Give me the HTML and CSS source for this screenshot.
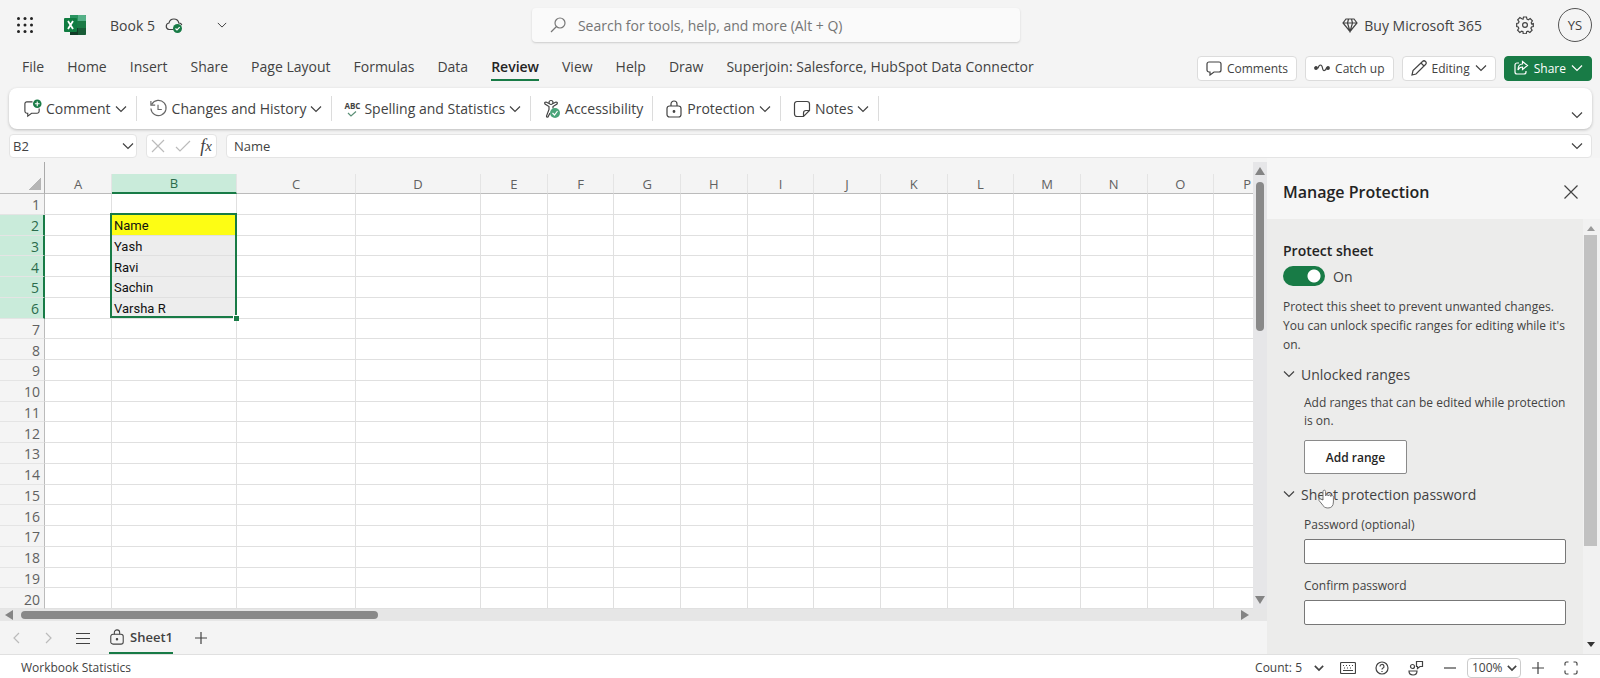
FILE: index.html
```html
<!doctype html>
<html lang="en">

  <head>

    <title>Book 5 - Excel</title>

    <meta charset="utf-8">
    <meta name="viewport" content="width=device-width, initial-scale=1" />

    <link rel="stylesheet" href="styles.css">

  </head>

  <body>

    <svg class="sprite" aria-hidden="true">
      <symbol id="chevron" viewBox="0 0 12 12"><path d="M1 3.5l5 5 5-5" /></symbol>
      <symbol id="lock" viewBox="0 0 18 18">
        <rect x="2" y="6" width="14" height="11" rx="2.5" />
        <path d="M6 6V4a3 3 0 0 1 6 0v2" />
        <circle cx="9" cy="11.5" r=".8" fill="currentColor" />
      </symbol>
      <symbol id="plus" viewBox="0 0 14 14"><path d="M7 1v12M1 7h12" /></symbol>
    </svg>

    <div class="app">

      <header class="titlebar">
        <button class="plain waffle" aria-label="App launcher">
          <svg class="icon" width="18" height="18" viewBox="0 0 18 18">
            <g fill="#222" stroke="none">
              <circle cx="2.5" cy="2.5" r="1.5" /><circle cx="9" cy="2.5" r="1.5" /><circle cx="15.5" cy="2.5" r="1.5" />
              <circle cx="2.5" cy="9" r="1.5" /><circle cx="9" cy="9" r="1.5" /><circle cx="15.5" cy="9" r="1.5" />
              <circle cx="2.5" cy="15.5" r="1.5" /><circle cx="9" cy="15.5" r="1.5" /><circle cx="15.5" cy="15.5" r="1.5" />
            </g>
          </svg>
        </button>
        <svg class="logo" width="22" height="20" viewBox="0 0 22 20">
          <rect x="6" y="0" width="16" height="20" rx="1" fill="#1b7a45" />
          <path d="M6 0h8v6H6z" fill="#2a9360" />
          <path d="M14 0h7l1 1v5h-8z" fill="#54b087" />
          <path d="M6 13h8v7H6z" fill="#123d28" />
          <path d="M14 13h8v6l-1 1h-7z" fill="#185c37" />
          <rect x="0" y="3" width="13" height="14" rx="1" fill="#107c41" />
          <path d="M4 6l5 8M9 6l-5 8" fill="none" stroke="#fff" stroke-width="1.8" />
        </svg>
        <span class="doc-name">Book 5</span>
        <svg class="icon cloud" width="18" height="18" viewBox="0 0 18 18">
          <path d="M8.5 13.5H4a3.3 3.3 0 0 1 0-6.5 5 5 0 0 1 9.8 0 3 3 0 0 1 3 2" />
          <circle cx="12.5" cy="12.5" r="4.5" fill="#187b46" stroke="none" />
          <path d="M10.500 12.500l1.500 1.500 2.700-2.800" stroke="#fff" />
        </svg>
        <button class="plain doc-menu" aria-label="Document menu"><svg class="icon" width="10" height="10"><use href="#chevron" /></svg></button>

        <label class="search">
          <svg class="icon" width="16" height="16" viewBox="0 0 16 16"><circle cx="10" cy="6" r="5" /><path d="M6.5 9.5L1 15" /></svg>
          <input type="search" placeholder="Search for tools, help, and more (Alt + Q)" aria-label="Search">
        </label>

        <a class="buy" href="#">
          <svg class="icon" width="16" height="16" viewBox="0 0 16 16"><path d="M4 2h8l3 4-7 8.5L1 6zM1 6h14M5.5 6L8 14.5 10.5 6l-1-4h-3z" /></svg>
          Buy Microsoft 365
        </a>
        <button class="plain settings" aria-label="Settings">
          <svg class="icon" width="18" height="18" viewBox="0 0 18 18">
            <circle cx="9" cy="9" r="2.4" />
            <path d="M7.500 1h3l.5 2.200 1.300.6 1.900-1.200 2.200 2.200-1.200 1.900.5 1.300L17.300 7.500v3l-1.800.5-.6 1.300 1.200 1.900-2.200 2.200-1.900-1.200-1.300.5-.5 2.100h-3L7 15.700l-1.300-.5-1.900 1.200-2.200-2.200 1.200-1.900L2.200 11 .7 10.500v-3L2.500 7l.5-1.300-1.300-1.900 2.200-2.200 1.900 1.200L7 3.200z" />
          </svg>
        </button>
        <button class="avatar" aria-label="Account">YS</button>
      </header>

      <nav class="tabs">
        <a class="tab" href="#">File</a>
        <a class="tab" href="#">Home</a>
        <a class="tab" href="#">Insert</a>
        <a class="tab" href="#">Share</a>
        <a class="tab" href="#">Page Layout</a>
        <a class="tab" href="#">Formulas</a>
        <a class="tab" href="#">Data</a>
        <a class="tab tab-active" href="#">Review</a>
        <a class="tab" href="#">View</a>
        <a class="tab" href="#">Help</a>
        <a class="tab" href="#">Draw</a>
        <a class="tab" href="#">Superjoin: Salesforce, HubSpot Data Connector</a>

        <div class="actions">
          <button class="action">
            <svg class="icon" width="16" height="16" viewBox="0 0 16 16"><path d="M3 2h10a2 2 0 0 1 2 2v6a2 2 0 0 1-2 2H8l-4 3v-3H3a2 2 0 0 1-2-2V4a2 2 0 0 1 2-2z" /></svg>
            Comments
          </button>
          <button class="action">
            <svg class="icon" width="16" height="16" viewBox="0 0 16 16"><path d="M2 8h2q1-3 2.500-3Q8 5 8.500 8t2 2.500Q12 10 12.500 8H14" /><circle cx="2" cy="8" r="1.3" fill="currentColor" /><circle cx="14" cy="8" r="1.3" fill="currentColor" /></svg>
            Catch up
          </button>
          <button class="action">
            <svg class="icon" width="16" height="16" viewBox="0 0 16 16"><path d="M1 15l1-4.5 9.5-9a2 2 0 0 1 3 3L5 14zM10 3l3 3" /></svg>
            Editing
            <svg class="icon" width="12" height="12"><use href="#chevron" /></svg>
          </button>
          <button class="action action-share">
            <svg class="icon" width="16" height="16" viewBox="0 0 16 16"><path d="M6 3H4a2 2 0 0 0-2 2v7a2 2 0 0 0 2 2h7a2 2 0 0 0 2-2v-1" /><path d="M9.5 4V1.500l5 4-5 4V7c-2 0-3.500.8-4.500 3 0-3.500 1.500-6 4.500-6z" /></svg>
            Share
            <svg class="icon" width="12" height="12"><use href="#chevron" /></svg>
          </button>
        </div>
      </nav>

      <div class="ribbon">
        <button class="tool">
          <svg class="icon" width="19" height="19" viewBox="0 0 20 20"><path d="M10 3H4a2 2 0 0 0-2 2v8a2 2 0 0 0 2 2h1v3l4-3h6a2 2 0 0 0 2-2v-3" /><circle cx="15" cy="5" r="4.500" fill="#187b46" stroke="none" /><path d="M15 2.500v5M12.500 5h5" stroke="#fff" /></svg>
          Comment
          <svg class="icon" width="12" height="12"><use href="#chevron" /></svg>
        </button>
        <button class="tool">
          <svg class="icon" width="19" height="19" viewBox="0 0 20 20"><path d="M3 5.500A8 8 0 1 1 2 10M2 2v4.500h4.500M9.500 6v5h4" stroke="#666" /></svg>
          Changes and History
          <svg class="icon" width="12" height="12"><use href="#chevron" /></svg>
        </button>
        <button class="tool">
          <span class="abc">ABC<svg class="icon" width="12" height="6" viewBox="0 0 12 6"><path d="M2 2l3 3 5-4.500" stroke="#5b8f76" /></svg></span>
          Spelling and Statistics
          <svg class="icon" width="12" height="12"><use href="#chevron" /></svg>
        </button>
        <button class="tool">
          <svg class="icon" width="18" height="20" viewBox="0 0 18 20"><circle cx="8" cy="3.500" r="2" /><path d="M6 4.500L3 3Q1 3 2 5l4 2.500v3L3.500 17q0 1.500 1.500 1L7 14M10 4.500L13 3q2 0 1 2l-4 2.500v2" /><circle cx="12" cy="14" r="5" fill="#4aa47a" stroke="none" /><path d="M9.500 14l2 2 3-4" stroke="#fff" /></svg>
          Accessibility
        </button>
        <button class="tool">
          <svg class="icon" width="18" height="18"><use href="#lock" /></svg>
          Protection
          <svg class="icon" width="12" height="12"><use href="#chevron" /></svg>
        </button>
        <button class="tool">
          <svg class="icon" width="18" height="18" viewBox="0 0 18 18"><path d="M4 1.500h10A2.500 2.500 0 0 1 16.500 4v6.500l-6 6H4A2.500 2.500 0 0 1 1.500 14V4A2.500 2.500 0 0 1 4 1.500zM10.500 16.500V13a2.500 2.500 0 0 1 2.500-2.500h3.500" /></svg>
          Notes
          <svg class="icon" width="12" height="12"><use href="#chevron" /></svg>
        </button>
        <button class="plain ribbon-toggle" aria-label="Collapse ribbon"><svg class="icon" width="12" height="12"><use href="#chevron" /></svg></button>
      </div>

      <div class="formula-row">
        <div class="field name-box">
          <input value="B2" aria-label="Name box">
          <button class="plain" aria-label="Named ranges"><svg class="icon" width="12" height="12"><use href="#chevron" /></svg></button>
        </div>
        <div class="field fx-box">
          <button class="plain" aria-label="Cancel"><svg class="icon faded" width="14" height="14" viewBox="0 0 14 14"><path d="M1 1l12 12M13 1L1 13" /></svg></button>
          <button class="plain" aria-label="Enter"><svg class="icon faded" width="16" height="14" viewBox="0 0 16 14"><path d="M1 8l4 4L15 2" /></svg></button>
          <button class="plain fx" aria-label="Insert function"><i>f</i><small>x</small></button>
        </div>
        <div class="field formula">
          <input value="Name" aria-label="Formula bar">
          <button class="plain" aria-label="Expand formula bar"><svg class="icon" width="12" height="12"><use href="#chevron" /></svg></button>
        </div>
      </div>

      <main class="workspace">

        <section class="book">
          <div class="sheet">
            <div class="grid-wrap">
              <div class="grid-strip"></div>
              <div class="grid-view">
                <table class="grid">
                  <colgroup>
                    <col class="col-index"><col class="col-a"><col class="col-b"><col class="col-c"><col class="col-b">
                    <col span="12">
                  </colgroup>
                  <thead><tr id="grid-head"><th class="corner"></th></tr></thead>
                  <tbody id="grid-body"></tbody>
                </table>
              </div>
            </div>
            <div class="vscroll">
              <svg width="10" height="8" viewBox="0 0 10 8"><path d="M5 0l5 8H0z" /></svg>
              <div class="vscroll-thumb"></div>
              <svg width="10" height="8" viewBox="0 0 10 8"><path d="M0 0h10L5 8z" /></svg>
            </div>
          </div>
          <div class="hscroll">
            <svg width="8" height="10" viewBox="0 0 8 10"><path d="M8 0v10L0 5z" /></svg>
            <div class="hscroll-thumb"></div>
            <svg width="8" height="10" viewBox="0 0 8 10"><path d="M0 0l8 5-8 5z" /></svg>
          </div>
          <div class="sheetbar">
            <button class="plain" aria-label="Previous sheet"><svg class="icon faded" width="10" height="12" viewBox="0 0 10 12"><path d="M7 1L2 6l5 5" /></svg></button>
            <button class="plain" aria-label="Next sheet"><svg class="icon faded" width="10" height="12" viewBox="0 0 10 12"><path d="M2 1l5 5-5 5" /></svg></button>
            <button class="plain" aria-label="All sheets"><svg class="icon" width="14" height="12" viewBox="0 0 14 12"><path d="M0 1.500h14M0 6.500h14M0 11.500h14" /></svg></button>
            <button class="sheet-tab"><svg class="icon" width="16" height="16"><use href="#lock" /></svg>Sheet1</button>
            <button class="plain" aria-label="New sheet"><svg class="icon" width="14" height="14"><use href="#plus" /></svg></button>
          </div>
        </section>

        <aside class="panel">
          <div class="panel-head">
            <h2>Manage Protection</h2>
            <button class="plain" aria-label="Close"><svg class="icon" width="16" height="16" viewBox="0 0 16 16"><path d="M1.500 1.500l13 13M14.500 1.500l-13 13" /></svg></button>
          </div>
          <div class="panel-view">
            <div class="panel-body">
              <h3 id="protect-label">Protect sheet</h3>
              <label class="switch"><input type="checkbox" role="switch" aria-labelledby="protect-label" checked>On</label>
              <p>Protect this sheet to prevent unwanted changes. You can unlock specific ranges for editing while it's on.</p>

              <button class="section-toggle"><svg class="icon" width="12" height="12"><use href="#chevron" /></svg>Unlocked ranges</button>
              <div class="section">
                <p>Add ranges that can be edited while protection is on.</p>
                <button class="add-range">Add range</button>
              </div>

              <button class="section-toggle"><svg class="icon" width="12" height="12"><use href="#chevron" /></svg>Sheet protection password
                <svg class="pointer" width="18" height="20" viewBox="0 0 18 20"><path d="M6 11V2.500a1.300 1.300 0 0 1 2.600 0V7a1.300 1.300 0 0 1 2.600 0 1.300 1.300 0 0 1 2.600.5 1.300 1.300 0 0 1 2.600.8V13c0 4-2 6-5.500 6-3 0-4.500-1.500-6-4L2 11.500c-.6-1.500 1-2.200 2-1.200z" fill="#fff" stroke="#777" /></svg>
              </button>
              <div class="section">
                <label for="password">Password (optional)</label>
                <input type="password" id="password">
                <label for="confirm">Confirm password</label>
                <input type="password" id="confirm">
              </div>
            </div>
            <div class="panel-scroll">
              <svg width="8" height="5" viewBox="0 0 8 5"><path d="M4 0l4 5H0z" fill="#999" /></svg>
              <div class="panel-thumb"></div>
              <svg width="8" height="5" viewBox="0 0 8 5"><path d="M0 0h8L4 5z" fill="#333" /></svg>
            </div>
          </div>
        </aside>

      </main>

      <footer class="status">
        <span>Workbook Statistics</span>
        <button class="plain count">Count: 5 <svg class="icon heavy" width="10" height="10"><use href="#chevron" /></svg></button>
        <button class="plain" aria-label="Keyboard"><svg class="icon" width="16" height="14" viewBox="0 0 16 14"><rect x=".5" y="1.500" width="15" height="11" rx="1" /><path d="M3 4.500h1M6 4.500h1M9 4.500h1M12 4.500h1M4 7h1M7 7h1M10 7h1M3 9.500h10" /></svg></button>
        <button class="plain" aria-label="Help"><svg class="icon" width="14" height="14" viewBox="0 0 14 14"><circle cx="7" cy="7" r="6" /><path d="M5 5.500a2 2 0 1 1 2.800 1.800Q7 7.700 7 8.500M7 10v1" /></svg></button>
        <button class="plain" aria-label="Feedback"><svg class="icon" width="16" height="16" viewBox="0 0 16 16"><circle cx="4.500" cy="6.500" r="2" /><path d="M1 11h8q0 4-4 4t-4-4zM8.500 1.500h6v5H12L9.500 8.500v-2h-1z" /></svg></button>
        <button class="plain" aria-label="Zoom out"><svg class="icon" width="14" height="14" viewBox="0 0 14 14"><path d="M1 7h12" /></svg></button>
        <div class="zoom">
          <select aria-label="Zoom"><option>100%</option></select>
          <svg class="icon heavy" width="10" height="10"><use href="#chevron" /></svg>
        </div>
        <button class="plain" aria-label="Zoom in"><svg class="icon" width="14" height="14"><use href="#plus" /></svg></button>
        <button class="plain" aria-label="Full screen"><svg class="icon" width="14" height="14" viewBox="0 0 14 14"><path d="M1 4.500V2.500Q1 1 2.500 1h2M9.500 1h2Q13 1 13 2.500v2M13 9.500v2q0 1.500-1.500 1.500h-2M4.500 13h-2Q1 13 1 11.500v-2" /></svg></button>
      </footer>

    </div>

    <script src="script.js"></script>
  </body>

</html>
```
FILE: styles.css
```css
:root {
  --text-color: #424242;
  --dark-text: #242424;
  --background-color: #f4f4f4;
  --green: #187b46;
  --pale-green: #c9ebda;
  --line: #dcdcdc;
}

*, *::after {
  box-sizing: border-box;
}

body {
  margin: 0;
  font-family: "Open Sans", "Noto Sans", sans-serif;
  font-size: 14px;
  color: var(--text-color);
  background: var(--background-color);
}

button, input, select {
  font: inherit;
  color: inherit;
}

a {
  color: inherit;
  text-decoration: none;
}

h2, h3, p {
  margin: 0;
}

.sprite {
  display: none;
}

.icon {
  fill: none;
  stroke: currentColor;
  stroke-width: 1.2;
  flex: none;
}

.heavy {
  stroke-width: 2;
}

.faded {
  color: #bbb;
}

.plain {
  display: flex;
  align-items: center;
  padding: 0;
  border: 0;
  background: none;
}

.app {
  display: flex;
  flex-direction: column;
  height: 100vh;
}

/* title bar */

.titlebar {
  display: flex;
  align-items: center;
  height: 50px;
  padding: 0 8px 0 16px;
}

.waffle {
  margin-right: 30px;
}

.logo {
  margin-right: 24px;
}

.cloud {
  margin: 0 34px 0 10px;
}

.search {
  display: flex;
  align-items: center;
  gap: 12px;
  width: 488px;
  height: 34px;
  margin-left: 305px;
  padding: 0 18px;
  background: #fafafa;
  border-radius: 4px;
  box-shadow: 0 1px 2px #ccc;
}

.search .icon {
  color: #777;
}

.search input {
  flex: 1;
  padding: 0;
  border: 0;
  background: none;
}

.search input::placeholder {
  color: #757575;
}

.buy {
  display: flex;
  align-items: center;
  gap: 6px;
  margin-left: auto;
}

.settings {
  margin: 0 24px 0 34px;
}

.avatar {
  width: 34px;
  height: 34px;
  padding: 0;
  border: 1px solid #555;
  border-radius: 50%;
  background: none;
  font-size: 13px;
}

/* tabs */

.tabs {
  display: flex;
  align-items: center;
  height: 36px;
  margin-bottom: 2px;
  padding: 0 8px 0 10px;
}

.tab {
  margin: 0 11px 0 12px;
  line-height: 24px;
  border-bottom: 2px solid transparent;
}

.tab-active {
  color: var(--dark-text);
  font-weight: 600;
  border-color: var(--green);
}

.actions {
  display: flex;
  gap: 8px;
  margin-left: auto;
}

.action {
  display: flex;
  align-items: center;
  gap: 5px;
  height: 25px;
  padding: 0 8px;
  border: 1px solid var(--line);
  border-radius: 4px;
  background: #fff;
  font-size: 12px;
}

.action-share {
  color: #fff;
  background: var(--green);
  border-color: var(--green);
}

/* ribbon */

.ribbon {
  display: flex;
  align-items: center;
  height: 41px;
  margin: 0 8px 5px 9px;
  padding: 0 9px 0 2px;
  background: #fff;
  border-radius: 8px;
  box-shadow: 0 1px 3px #bbb;
}

.tool {
  display: flex;
  align-items: center;
  gap: 4px;
  height: 25px;
  padding: 0 9px 0 12px;
  border: 0;
  border-right: 1px solid var(--line);
  background: none;
}

.abc {
  display: flex;
  flex-direction: column;
  align-items: center;
  font-size: 8px;
  line-height: 10px;
  font-weight: 700;
}

.ribbon-toggle {
  margin-left: auto;
  padding-top: 12px;
}

/* formula bar */

.formula-row {
  display: flex;
  gap: 9px;
  padding: 0 8px 0 9px;
}

.field {
  display: flex;
  align-items: center;
  height: 24px;
  padding: 0 4px;
  background: #fff;
  border: 1px solid #e4e4e4;
  border-radius: 4px;
}

.field input {
  flex: 1;
  min-width: 0;
  padding: 0;
  border: 0;
  background: none;
  font-size: 13px;
}

.name-box {
  width: 128px;
  padding: 0 2px 0 3px;
}

.fx-box {
  width: 71px;
  justify-content: space-between;
}

.fx {
  font-family: "Liberation Serif", serif;
  font-size: 18px;
}

.fx small {
  font-size: 15px;
  font-style: italic;
}

.formula {
  flex: 1;
  padding: 0 8px 0 7px;
}

/* sheet */

.workspace {
  display: flex;
  flex: 1;
  min-height: 0;
}

.book {
  display: flex;
  flex-direction: column;
  flex: 1;
  min-width: 0;
}

.sheet {
  display: flex;
  flex: 1;
  min-height: 0;
  padding-top: 4px;
}

.grid-wrap {
  display: flex;
  flex-direction: column;
  flex: 1;
  min-width: 0;
}

.grid-strip {
  width: 45px;
  height: 12px;
  border-right: 1px solid #aaa;
}

.grid-view {
  flex: 1;
  min-height: 0;
  overflow: hidden;
}

/* runs past the view so that column P is cut off */
.grid {
  width: calc(100% + 28px);
  height: 100%;
  table-layout: fixed;
  border-spacing: 0;
  background: #fff;
}

.col-index {
  width: 45px;
}

.col-a {
  width: 67px;
}

.col-b {
  width: 125px;
}

.col-c {
  width: 119px;
}

.grid th {
  padding: 0;
  font-weight: 400;
  color: #616161;
  background: var(--background-color);
}

.grid thead th {
  height: 20px;
  font-size: 13px;
  line-height: 18px;
  border-right: 1px solid #e4e4e4;
  border-bottom: 1px solid #bbb;
}

.grid thead .corner {
  border-right-color: #aaa;
  background: linear-gradient(135deg, transparent 50%, #b5b5b5 50%) right 3px bottom 3px / 12px 12px no-repeat var(--background-color);
}

.grid tbody th {
  padding: 2px 4px 0 0;
  text-align: right;
  line-height: 17px;
  border-right: 1px solid #bbb;
  border-bottom: 1px solid #e4e4e4;
}

.grid td {
  padding: 3px 2px 0;
  font-family: Roboto, sans-serif;
  font-size: 13px;
  line-height: 16px;
  color: #111;
  border-right: 1px solid #e0e0e0;
  border-bottom: 1px solid #e0e0e0;
}

.grid thead .selected {
  color: #2b6b4c;
  background: var(--pale-green);
  border-bottom: 2px solid var(--green);
}

.grid tbody .selected {
  color: #2b6b4c;
  background: var(--pale-green);
  border-right: 2px solid var(--green);
}

.grid .range {
  position: relative;
  background: #ededed;
}

.grid .range-first {
  background: #fdfd14;
}

/* outline over the five selected cells */
.range-first::after {
  content: "";
  position: absolute;
  z-index: 1;
  top: -2px;
  left: -2px;
  width: calc(100% + 3px);
  height: calc(500% + 6px);
  border: 2px solid var(--green);
}

.range-last::after {
  content: "";
  position: absolute;
  z-index: 2;
  right: -3px;
  bottom: -3px;
  width: 6px;
  height: 6px;
  border-top: 1px solid #fff;
  border-left: 1px solid #fff;
  background: var(--green);
}

.vscroll {
  display: flex;
  flex-direction: column;
  align-items: center;
  justify-content: space-between;
  width: 14px;
  padding: 5px 0;
  background: #e6e6e8;
}

.vscroll svg, .hscroll svg {
  fill: #848484;
}

.vscroll-thumb {
  width: 8px;
  height: 149px;
  margin: 7px 0 auto;
  border-radius: 4px;
  background: #898989;
}

.hscroll {
  display: flex;
  align-items: center;
  height: 12px;
  padding: 0 18px 0 5px;
  background: #e6e6e6;
}

.hscroll-thumb {
  width: 357px;
  height: 8px;
  margin: 0 auto 0 8px;
  border-radius: 4px;
  background: #898989;
}

.sheetbar {
  display: flex;
  align-items: center;
  gap: 21px;
  height: 33px;
  padding-left: 12px;
}

.sheetbar .plain + .plain {
  margin-left: 1px;
}

.sheet-tab {
  display: flex;
  align-items: center;
  gap: 5px;
  align-self: stretch;
  margin-left: -2px;
  padding: 0;
  border: 0;
  border-bottom: 2px solid var(--green);
  background: none;
  font-size: 13px;
  font-weight: 600;
}

/* protection panel */

.panel {
  display: flex;
  flex-direction: column;
  width: 333px;
  font-size: 12px;
}

.panel-head {
  display: flex;
  align-items: center;
  justify-content: space-between;
  height: 61px;
  padding: 6px 21px 0 16px;
  background: #f6f6f6;
}

.panel h2 {
  font-size: 16px;
  font-weight: 600;
  color: var(--dark-text);
}

.panel-view {
  display: flex;
  flex: 1;
  min-height: 0;
  background: #ececeb;
}

.panel-body {
  flex: 1;
  padding: 20px 17px 0 16px;
  overflow: hidden;
}

.panel h3 {
  font-size: 14px;
  line-height: 24px;
  font-weight: 600;
  color: var(--dark-text);
}

.switch {
  display: flex;
  align-items: center;
  gap: 8px;
  height: 26px;
  font-size: 14px;
}

.switch input {
  appearance: none;
  width: 42px;
  height: 20px;
  margin: 0;
  border-radius: 10px;
  background: radial-gradient(circle at 31px 10px, #fff 6px, var(--green) 7px);
}

.panel p {
  margin-top: 8px;
  line-height: 19px;
}

.section-toggle {
  position: relative;
  display: flex;
  align-items: center;
  gap: 6px;
  width: 100%;
  height: 40px;
  padding: 0;
  border: 0;
  background: none;
  font-size: 14px;
}

.pointer {
  position: absolute;
  left: 34px;
  top: 15px;
}

.section {
  padding-left: 21px;
}

.section p {
  margin: 0 0 10px;
  line-height: 18px;
}

.add-range {
  width: 103px;
  height: 34px;
  padding: 0;
  border: 1px solid #8a8a8a;
  border-radius: 2px;
  background: #fff;
  color: var(--dark-text);
  font-weight: 600;
}

.section label {
  display: block;
  line-height: 22px;
  margin-bottom: 3px;
}

.section input {
  display: block;
  width: 100%;
  height: 25px;
  margin-bottom: 11px;
  border: 1px solid #777;
  border-radius: 2px;
  background: #fff;
}

.panel-scroll {
  display: flex;
  flex-direction: column;
  align-items: center;
  justify-content: space-between;
  width: 17px;
  padding: 7px 2px 7px 0;
  background: #f1f1f1;
}

.panel-thumb {
  width: 13px;
  height: 311px;
  margin: 4px 0 auto;
  background: #c1c1c1;
}

/* status bar */

.status {
  display: flex;
  align-items: center;
  gap: 19px;
  height: 24px;
  padding: 2px 22px 0 21px;
  background: #fff;
  border-top: 1px solid #e0e0e0;
  font-size: 12px;
}

.count {
  gap: 12px;
  margin: 0 -3px 0 auto;
}

.zoom {
  position: relative;
  display: flex;
  margin: 0 -9px;
}

.zoom select {
  appearance: none;
  width: 54px;
  height: 20px;
  padding: 0 4px;
  border: 1px solid #ccc;
  border-radius: 4px;
  background: #fff;
}

.zoom .icon {
  position: absolute;
  right: 4px;
  top: 5px;
  pointer-events: none;
}
```
FILE: script.js
```js
const columns = 'ABCDEFGHIJKLMNOP'.split('')
const names = { 2: 'Name', 3: 'Yash', 4: 'Ravi', 5: 'Sachin', 6: 'Varsha R' }

const head = document.getElementById('grid-head')
for (const column of columns) {
  const th = document.createElement('th')
  th.textContent = column
  if (column === 'B') th.className = 'selected'
  head.append(th)
}

const body = document.getElementById('grid-body')
for (let row = 1; row <= 20; row++) {
  const tr = document.createElement('tr')
  const th = document.createElement('th')
  th.textContent = row
  if (names[row]) th.className = 'selected'
  tr.append(th)

  for (const column of columns) {
    const td = document.createElement('td')
    if (column === 'B' && names[row]) {
      td.textContent = names[row]
      td.className = 'range'
      if (row === 2) td.classList.add('range-first')
      if (row === 6) td.classList.add('range-last')
    }
    tr.append(td)
  }
  body.append(tr)
}
```
